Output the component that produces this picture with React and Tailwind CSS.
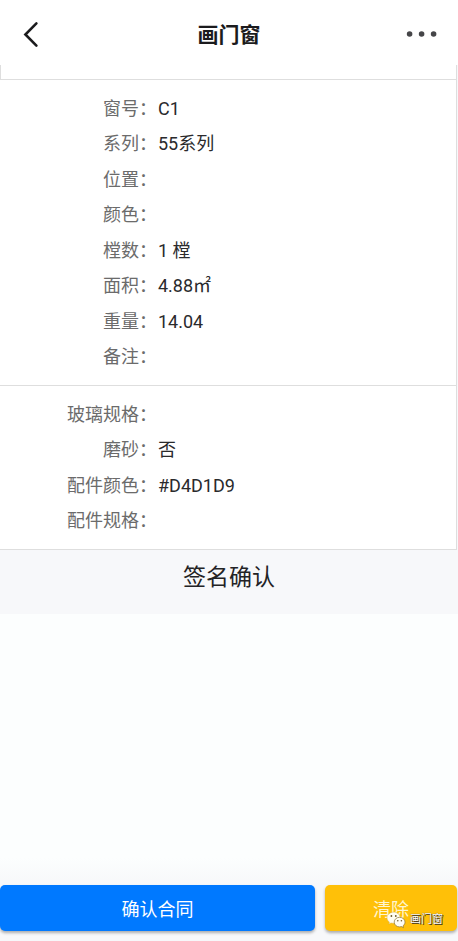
import React from 'react';

const windowInfo = [
  { label: '窗号', value: 'C1' },
  { label: '系列', value: '55系列' },
  { label: '位置', value: '' },
  { label: '颜色', value: '' },
  { label: '樘数', value: '1 樘' },
  { label: '面积', value: '4.88㎡' },
  { label: '重量', value: '14.04' },
  { label: '备注', value: '' },
];

const glassInfo = [
  { label: '玻璃规格', value: '' },
  { label: '磨砂', value: '否' },
  { label: '配件颜色', value: '#D4D1D9' },
  { label: '配件规格', value: '' },
];

const InfoList = ({ items, className }) => (
  <dl className={`grid pt-[11px] pb-[10px] border-b border-[#dedede] text-lg leading-[28px] ${className}`}>
    {items.map((item) => (
      <div key={item.label} className="flex items-center gap-px">
        <dt className="w-[157px] shrink-0 text-right text-[#6b6b6b]">{item.label}：</dt>
        <dd className="text-[#2a2a2c]">{item.value}</dd>
      </div>
    ))}
  </dl>
);

const Header = () => (
  <header className="flex items-center justify-between h-[65px] pt-[5px] px-5 bg-white">
    <button type="button" aria-label="返回" className="w-8 h-8 flex items-center">
      <svg viewBox="0 0 22 30" className="w-[22px] h-[30px]" fill="none" stroke="#1b1b1d" strokeWidth="2.6">
        <path d="M16.400 3.400 5.400 14.500 16.400 25.600" strokeLinecap="round" strokeLinejoin="miter" />
      </svg>
    </button>
    <h1 className="text-[21px] leading-[30px] font-bold text-[#1b1b1d]">画门窗</h1>
    <button type="button" aria-label="更多" className="w-8 h-8 flex items-center justify-center">
      <svg viewBox="0 0 32 8" className="w-8 h-2" fill="#454548">
        <circle cx="3.6" cy="3" r="2.8" />
        <circle cx="15.6" cy="3" r="2.8" />
        <circle cx="27.6" cy="3" r="2.8" />
      </svg>
    </button>
  </header>
);

// WeChat account mark in the corner
const AccountMark = () => (
  <div className="absolute right-[15px] bottom-[12px] flex items-center gap-[4px] pointer-events-none">
    <svg viewBox="0 0 20 18" className="w-5 h-[18px]">
      <path
        d="M7.6 1.2C3.900 1.200 1 3.700 1 6.800c0 1.800.9 3.300 2.400 4.300l-.7 2 2.400-1.200c.8.2 1.600.4 2.500.4 3.700 0 6.600-2.500 6.600-5.500S11.300 1.200 7.600 1.200z"
        fill="#fffdf2"
        stroke="#c9a440"
        strokeWidth=".4"
      />
      <path
        d="M13.600 6.300c-3 0-5.400 2.100-5.400 4.800s2.400 4.800 5.400 4.800c.7 0 1.300-.1 1.900-.3l2 1.100-.5-1.800c1.200-.9 2-2.200 2-3.800 0-2.700-2.400-4.800-5.400-4.800z"
        fill="#fffdf2"
        stroke="#8c722f"
        strokeWidth=".7"
      />
      <g fill="#6d5a2b">
        <circle cx="5.400" cy="5" r=".9" />
        <circle cx="9.800" cy="5" r=".9" />
        <circle cx="11.800" cy="9.700" r=".8" />
        <circle cx="15.400" cy="9.700" r=".8" />
      </g>
    </svg>
    <span className="text-[11px] leading-[16px] text-white [text-shadow:1px_1px_0_#3d3521,0_0_1px_#3d3521]">画门窗</span>
  </div>
);

const App = () => {
  return (
    <div className="flex flex-col min-h-screen bg-[#f7f8fa] font-[Roboto,'Noto_Sans_CJK_SC',sans-serif]">
      <Header />

      <main className="flex flex-col flex-1">
        <div className="mr-px border-r border-[#dedede] bg-white">
          <div className="h-[15px] border-b border-l border-[#dedede]" />
          <InfoList items={windowInfo} className="min-h-[306px]" />
          <InfoList items={glassInfo} className="min-h-[164px]" />
        </div>

        <h2 className="pt-[11px] pb-[19px] text-center text-[23px] leading-[34px] text-[#232325]">签名确认</h2>

        {/* Signature pad */}
        <div className="relative flex flex-1 bg-linear-to-b from-[#fcfefe] from-90% to-[#f7f8fa]">
          <canvas aria-label="签名" className="absolute inset-0 w-full h-full" />
        </div>
      </main>

      <footer className="relative flex gap-[10px] pb-[10px] pr-px text-lg leading-[28px] text-white">
        <button type="button" className="flex-1 pt-[11px] pb-[7px] rounded-[5px] bg-[#0079ff] shadow-[0_2px_3px_rgba(0,0,0,0.3)]">
          确认合同
        </button>
        <button type="button" className="w-[132px] pt-[11px] pb-[7px] rounded-[5px] bg-[#ffc008] text-[#fff6d0] shadow-[0_2px_3px_rgba(0,0,0,0.3)]">
          清除
        </button>
        <AccountMark />
      </footer>
    </div>
  );
};

export default App;
